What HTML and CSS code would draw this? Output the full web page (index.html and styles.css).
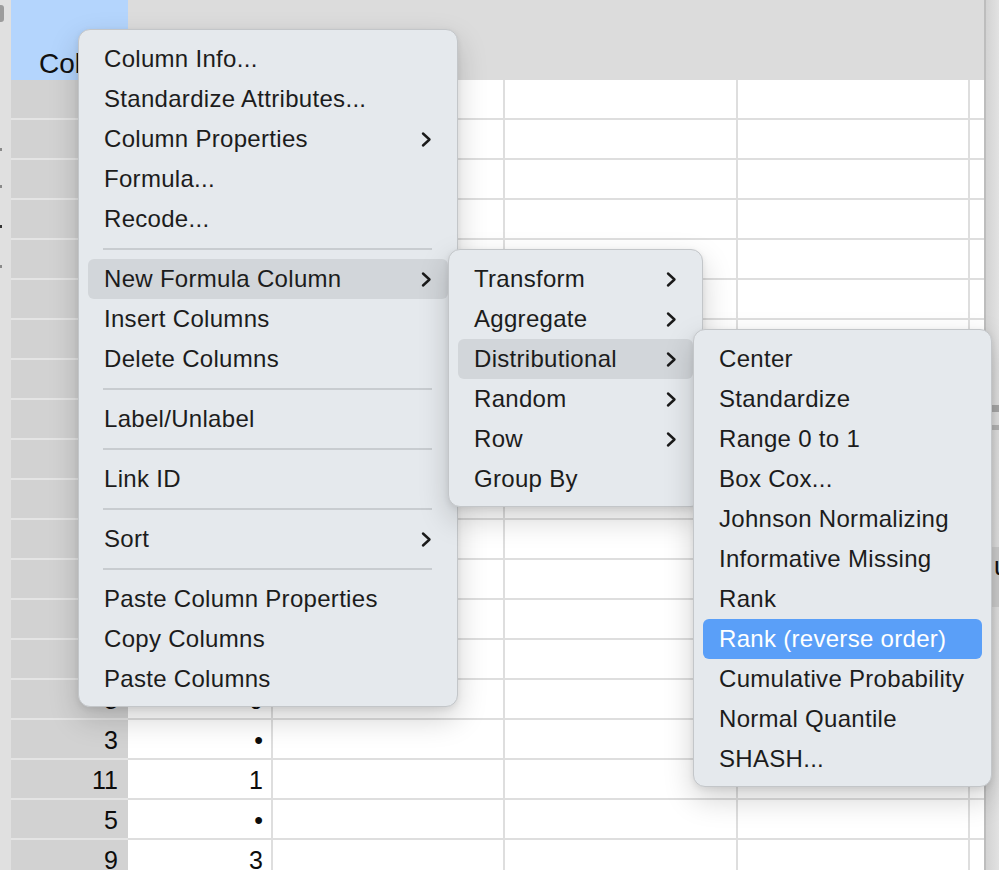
FILE: index.html
```html
<!DOCTYPE html>
<html>
<head>
<meta charset="utf-8">
<link rel="stylesheet" href="styles.css">
</head>
<body>
<div class="app">
  <div class="edge">
    <span class="knob"></span>
    <span class="tick t1"></span>
    <span class="tick t2"></span>
    <span class="tick t3"></span>
    <span class="tick t4"></span>
  </div>
  <div class="table">
    <div class="row head">
      <div class="cell rh sel"><span class="htxt">Column 1</span></div>
      <div class="cell hd"></div>
      <div class="cell hd"></div>
      <div class="cell hd"></div>
      <div class="cell hd"></div>
      <div class="cell hd last"></div>
    </div>
    <div class="row"><div class="cell rh"></div><div class="cell num"></div><div class="cell"></div><div class="cell"></div><div class="cell"></div><div class="cell last"></div></div>
    <div class="row"><div class="cell rh"></div><div class="cell num"></div><div class="cell"></div><div class="cell"></div><div class="cell"></div><div class="cell last"></div></div>
    <div class="row"><div class="cell rh"></div><div class="cell num"></div><div class="cell"></div><div class="cell"></div><div class="cell"></div><div class="cell last"></div></div>
    <div class="row"><div class="cell rh"></div><div class="cell num"></div><div class="cell"></div><div class="cell"></div><div class="cell"></div><div class="cell last"></div></div>
    <div class="row"><div class="cell rh"></div><div class="cell num"></div><div class="cell"></div><div class="cell"></div><div class="cell"></div><div class="cell last"></div></div>
    <div class="row"><div class="cell rh"></div><div class="cell num"></div><div class="cell"></div><div class="cell"></div><div class="cell"></div><div class="cell last"></div></div>
    <div class="row"><div class="cell rh"></div><div class="cell num"></div><div class="cell"></div><div class="cell"></div><div class="cell"></div><div class="cell last"></div></div>
    <div class="row"><div class="cell rh"></div><div class="cell num"></div><div class="cell"></div><div class="cell"></div><div class="cell"></div><div class="cell last"></div></div>
    <div class="row"><div class="cell rh"></div><div class="cell num"></div><div class="cell"></div><div class="cell"></div><div class="cell"></div><div class="cell last"></div></div>
    <div class="row"><div class="cell rh"></div><div class="cell num"></div><div class="cell"></div><div class="cell"></div><div class="cell"></div><div class="cell last"></div></div>
    <div class="row"><div class="cell rh"></div><div class="cell num"></div><div class="cell"></div><div class="cell"></div><div class="cell"></div><div class="cell last"></div></div>
    <div class="row"><div class="cell rh"></div><div class="cell num"></div><div class="cell"></div><div class="cell"></div><div class="cell"></div><div class="cell last"></div></div>
    <div class="row"><div class="cell rh"></div><div class="cell num"></div><div class="cell"></div><div class="cell"></div><div class="cell"></div><div class="cell last"></div></div>
    <div class="row"><div class="cell rh"></div><div class="cell num"></div><div class="cell"></div><div class="cell"></div><div class="cell"></div><div class="cell last"></div></div>
    <div class="row"><div class="cell rh"></div><div class="cell num"></div><div class="cell"></div><div class="cell"></div><div class="cell"></div><div class="cell last"></div></div>
    <div class="row"><div class="cell rh">8</div><div class="cell num">0</div><div class="cell"></div><div class="cell"></div><div class="cell"></div><div class="cell last"></div></div>
    <div class="row"><div class="cell rh">3</div><div class="cell num">•</div><div class="cell"></div><div class="cell"></div><div class="cell"></div><div class="cell last"></div></div>
    <div class="row"><div class="cell rh">11</div><div class="cell num">1</div><div class="cell"></div><div class="cell"></div><div class="cell"></div><div class="cell last"></div></div>
    <div class="row"><div class="cell rh">5</div><div class="cell num">•</div><div class="cell"></div><div class="cell"></div><div class="cell"></div><div class="cell last"></div></div>
    <div class="row"><div class="cell rh">9</div><div class="cell num">3</div><div class="cell"></div><div class="cell"></div><div class="cell"></div><div class="cell last"></div></div>
  </div>
  <div class="side">
    <span class="band b1"></span>
    <span class="band b2"></span>
    <span class="zone"><span class="ztxt">u</span></span>
  </div>
</div>

<div class="menu main-menu">
  <div class="item"><span>Column Info...</span></div>
  <div class="item"><span>Standardize Attributes...</span></div>
  <div class="item"><span>Column Properties</span><svg class="chev" viewBox="0 0 11 17" width="11" height="17"><path d="M2 2.5 L8.5 8.5 L2 14.5"/></svg></div>
  <div class="item"><span>Formula...</span></div>
  <div class="item"><span>Recode...</span></div>
  <div class="sep"></div>
  <div class="item hover"><span>New Formula Column</span><svg class="chev" viewBox="0 0 11 17" width="11" height="17"><path d="M2 2.5 L8.5 8.5 L2 14.5"/></svg></div>
  <div class="item"><span>Insert Columns</span></div>
  <div class="item"><span>Delete Columns</span></div>
  <div class="sep"></div>
  <div class="item"><span>Label/Unlabel</span></div>
  <div class="sep"></div>
  <div class="item"><span>Link ID</span></div>
  <div class="sep"></div>
  <div class="item"><span>Sort</span><svg class="chev" viewBox="0 0 11 17" width="11" height="17"><path d="M2 2.5 L8.5 8.5 L2 14.5"/></svg></div>
  <div class="sep"></div>
  <div class="item"><span>Paste Column Properties</span></div>
  <div class="item"><span>Copy Columns</span></div>
  <div class="item"><span>Paste Columns</span></div>
</div>

<div class="menu sub1">
  <div class="item"><span>Transform</span><svg class="chev" viewBox="0 0 11 17" width="11" height="17"><path d="M2 2.5 L8.5 8.5 L2 14.5"/></svg></div>
  <div class="item"><span>Aggregate</span><svg class="chev" viewBox="0 0 11 17" width="11" height="17"><path d="M2 2.5 L8.5 8.5 L2 14.5"/></svg></div>
  <div class="item hover"><span>Distributional</span><svg class="chev" viewBox="0 0 11 17" width="11" height="17"><path d="M2 2.5 L8.5 8.5 L2 14.5"/></svg></div>
  <div class="item"><span>Random</span><svg class="chev" viewBox="0 0 11 17" width="11" height="17"><path d="M2 2.5 L8.5 8.5 L2 14.5"/></svg></div>
  <div class="item"><span>Row</span><svg class="chev" viewBox="0 0 11 17" width="11" height="17"><path d="M2 2.5 L8.5 8.5 L2 14.5"/></svg></div>
  <div class="item"><span>Group By</span></div>
</div>

<div class="menu sub2">
  <div class="item"><span>Center</span></div>
  <div class="item"><span>Standardize</span></div>
  <div class="item"><span>Range 0 to 1</span></div>
  <div class="item"><span>Box Cox...</span></div>
  <div class="item"><span>Johnson Normalizing</span></div>
  <div class="item"><span>Informative Missing</span></div>
  <div class="item"><span>Rank</span></div>
  <div class="item active"><span>Rank (reverse order)</span></div>
  <div class="item"><span>Cumulative Probability</span></div>
  <div class="item"><span>Normal Quantile</span></div>
  <div class="item"><span>SHASH...</span></div>
</div>
</body>
</html>
```

FILE: styles.css
```css
html, body {
  margin: 0;
  padding: 0;
  width: 999px;
  height: 870px;
  overflow: hidden;
  background: #ffffff;
  font-family: "Liberation Sans", Arial, sans-serif;
  color: #111;
}

.app {
  display: flex;
  width: 999px;
  height: 870px;
}

/* left edge strip */
.edge {
  width: 11px;
  flex: none;
  background: #e0e0e0;
  display: flex;
  flex-direction: column;
  align-items: flex-start;
}
.knob {
  display: block;
  width: 4px;
  height: 17px;
  margin-top: 5px;
  background: #9c9c9c;
  border-radius: 0 3px 3px 0;
}
.tick {
  display: block;
  width: 2px;
  height: 3px;
  background: #8a8a8a;
}
.t1 { margin-top: 126px; }
.t2 { margin-top: 34px; }
.t3 { margin-top: 37px; background: #333; }
.t4 { margin-top: 37px; }

/* table */
.table {
  width: 973px;
  flex: none;
  display: flex;
  flex-direction: column;
}
.row {
  display: grid;
  grid-template-columns: 117px 145px 232px 233px 232px 14px;
  grid-template-rows: 40px;
  height: 40px;
  flex: none;
}
.row.head {
  grid-template-rows: 80px;
  height: 80px;
}
.cell {
  box-sizing: border-box;
  height: 100%;
  border-right: 2px solid #dedede;
  border-bottom: 2px solid #dedede;
  font-size: 25px;
  line-height: 40px;
  text-align: right;
  padding-right: 9px;
  white-space: nowrap;
  background: #fff;
  color: #0c0c0c;
}
.cell.last {
  border-right: none;
}
.cell.rh {
  background: #d2d2d2;
  border-right: none;
  border-bottom: 2px solid #e4e4e4;
  padding-right: 10px;
}
.cell.num {
  padding-right: 8px;
}
.head .cell {
  border: none;
  background: #dcdcdc;
}
.head .cell.sel {
  background: #b4d5fd;
  text-align: left;
  padding: 44px 0 0 28px;
  overflow: visible;
}
.htxt {
  font-size: 28px;
  line-height: 28px;
  color: #111;
}

/* right strip */
.side {
  width: 15px;
  flex: none;
  box-sizing: border-box;
  border-left: 2px solid #bdbdbd;
  background: linear-gradient(to right, #d3d3d3, #e2e2e2);
  display: flex;
  flex-direction: column;
}
.band {
  display: block;
  flex: none;
}
.b1 {
  height: 7px;
  margin-top: 405px;
  background: #a8a8a8;
}
.b2 {
  height: 5px;
  margin-top: 13px;
  background: #b4b4b4;
}
.zone {
  display: block;
  margin-top: 117px;
  height: 60px;
  background: #cdcdcd;
  overflow: hidden;
}
.ztxt {
  display: block;
  padding: 4px 0 0 8px;
  font-size: 26px;
  line-height: 30px;
  color: #111;
}

/* menus */
.menu {
  position: absolute;
  box-sizing: border-box;
  background: #e5e9ed;
  border: 1px solid #c3c6c9;
  border-radius: 12px;
  padding: 9px 0 7px;
  box-shadow: 0 12px 30px rgba(0, 0, 0, 0.18), 0 2px 6px rgba(0, 0, 0, 0.08);
  font-size: 24px;
  letter-spacing: 0.3px;
  color: #1c1c1c;
}
.main-menu {
  left: 78px;
  top: 29px;
  width: 380px;
  z-index: 1;
}
.sub1 {
  left: 448px;
  top: 249px;
  width: 255px;
  z-index: 2;
}
.sub2 {
  left: 693px;
  top: 329px;
  width: 299px;
  z-index: 3;
}
.item {
  height: 40px;
  margin: 0 9px;
  padding: 0 16px 0 16px;
  display: flex;
  align-items: center;
  justify-content: space-between;
  border-radius: 6px;
  line-height: 40px;
  white-space: nowrap;
}
.item span {
  display: block;
  margin-top: -1px;
}
.item.hover {
  background: #d2d6da;
}
.item.active {
  background: #5a9ff8;
  color: #ffffff;
}
.chev {
  flex: none;
  display: block;
}
.chev path {
  fill: none;
  stroke: #1a1a1a;
  stroke-width: 2.4;
  stroke-linecap: round;
  stroke-linejoin: round;
}
.sep {
  height: 20px;
  margin: 0 25px 0 24px;
  display: flex;
  align-items: center;
}
.sep::before {
  content: "";
  display: block;
  width: 100%;
  height: 1.5px;
  background: #c8ccd0;
}
```
